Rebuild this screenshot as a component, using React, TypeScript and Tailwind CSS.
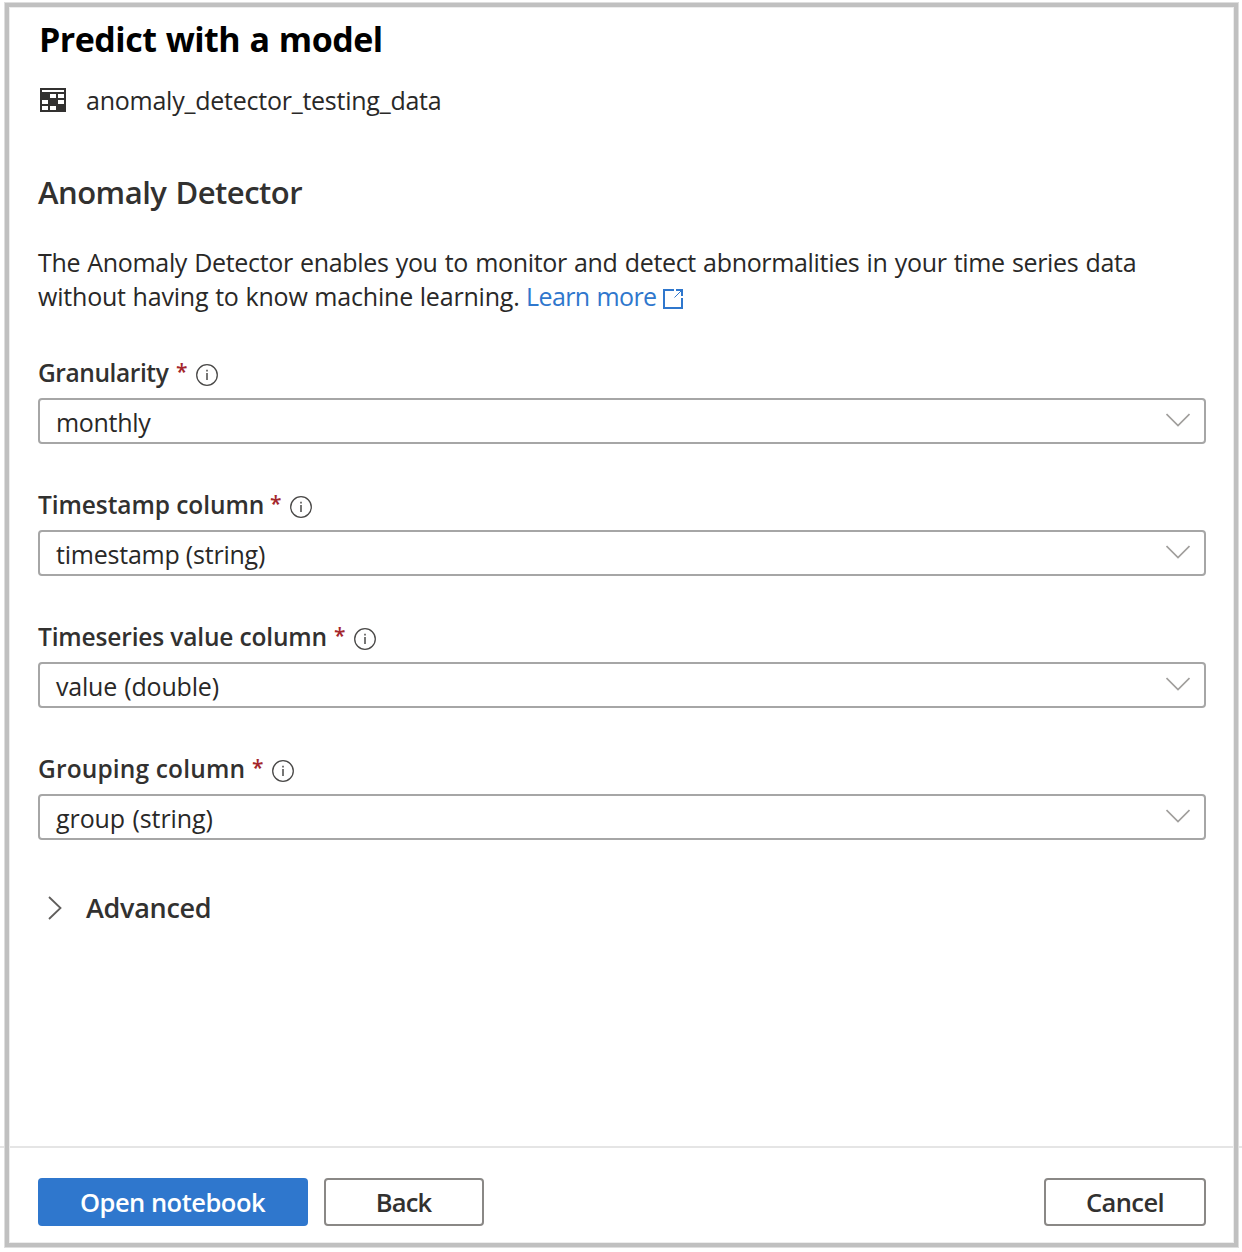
import type { ReactNode } from "react";

function TableIcon() {
  return (
    <svg className="h-6 w-[26px]" viewBox="0 0 26 24" shapeRendering="crispEdges">
      <path fill="#323130" d="M0 0h26v24H0z" />
      <path
        fill="#fff"
        d="M2 2h22v2H2zM10 6h6v4h-6zM18 6h6v4h-6zM2 12h6v4H2zM18 12h6v4h-6zM2 18h6v4H2zM10 18h6v4h-6z"
      />
    </svg>
  );
}

function ExternalIcon() {
  return (
    <svg className="h-5 w-5" viewBox="0 0 20 20" fill="none" stroke="#2f77cd">
      <path strokeWidth="2" d="M11 1H1v18h18V9M13 1h6v6" />
      <path strokeWidth="1" d="M11.5 8.5 18.5 1.5" />
    </svg>
  );
}

function InfoIcon() {
  return (
    <svg className="h-[22px] w-[22px]" viewBox="0 0 22 22" fill="none">
      <circle cx="11" cy="11" r="10.3" stroke="#4a4948" strokeWidth="1.3" />
      <path stroke="#4a4948" strokeWidth="1.5" d="M11 9v7M11 5.8v1.6" />
    </svg>
  );
}

function Field({ label, value }: { label: ReactNode; value: ReactNode }) {
  return (
    <div className="mb-[43px]">
      <div className="mb-[7px] flex h-9 items-center text-[24.5px] leading-9 font-semibold text-[#323130]">
        {label}
        <span className="ml-[7px] w-3 pb-1 text-[21px] text-[#a4262c]">*</span>
        <span className="mt-1 ml-2">
          <InfoIcon />
        </span>
      </div>
      <div className="flex h-[46px] items-center justify-between rounded-[4px] border-2 border-[#a6a6a6] pr-3.5 pl-4 text-[25px]">
        <span className="pt-[3px]">{value}</span>
        <svg className="mb-[3px] h-[14px] w-6" viewBox="0 0 24 14" fill="none">
          <path stroke="#a19f9d" strokeWidth="1.7" d="M.5 1 12 12.5 23.5 1" />
        </svg>
      </div>
    </div>
  );
}

export default function App() {
  return (
    <div className="relative flex h-[1252px] w-[1242px] flex-col overflow-hidden bg-white font-['Open_Sans',sans-serif] whitespace-nowrap text-[#292827]">
      <main className="flex-1 pt-[15px] pr-9 pl-[38px]">
        <h1 className="h-12 pl-px text-[34px] leading-[48px] font-bold tracking-[-0.52px] text-black [word-spacing:1px]">
          Predict with a model
        </h1>
        <div className="mt-[19px] flex h-9 items-center pl-0.5 text-[25px] leading-9">
          <TableIcon />
          <span className="ml-5 tracking-[-0.24px]">anomaly_detector_testing_data</span>
        </div>
        <h2 className="mt-[52px] h-11 text-[31px] leading-[44px] font-semibold tracking-[-0.5px] text-[#323130] [word-spacing:1.5px]">
          Anomaly Detector
        </h2>
        <p className="mt-[31px] text-[25px] leading-[34px]">
          <span className="block tracking-[-0.33px] [word-spacing:1px]">
            The Anomaly Detector enables you to monitor and detect abnormalities in your time series data
          </span>
          <span className="flex items-center">
            <span className="w-[482px] tracking-[-0.2px] [word-spacing:0.5px]">without having to know machine learning.</span>
            <a className="ml-[6px] flex items-center text-[#2f77cd]" href="#">
              <span className="w-[130px] tracking-[-0.6px] [word-spacing:1px]">Learn more</span>
              <span className="mt-1.5 ml-[7px]">
                <ExternalIcon />
              </span>
            </a>
          </span>
        </p>
        <div className="pt-[42px]">
          <Field
            label={<span className="w-[131px] tracking-[-0.42px]">Granularity</span>}
            value={<span className="tracking-[-0.3px]">monthly</span>}
          />
          <Field
            label={<span className="w-[225px] tracking-[-0.08px]">Timestamp column</span>}
            value={<span className="tracking-[-0.22px]">timestamp (string)</span>}
          />
          <Field
            label={<span className="w-[289px] tracking-[-0.16px]">Timeseries value column</span>}
            value={<span className="tracking-[-0.2px] [word-spacing:1px]">value (double)</span>}
          />
          <Field
            label={<span className="w-[207px] tracking-[0.15px]">Grouping column</span>}
            value={<span className="tracking-[-0.08px] [word-spacing:1px]">group (string)</span>}
          />
        </div>
        <div className="mt-12 flex h-10 items-center text-[27px] font-semibold text-[#323130]">
          <svg className="ml-2.5 h-6 w-[14px]" viewBox="0 0 14 24" fill="none">
            <path stroke="#605e5c" strokeWidth="1.8" d="M1 1 12.5 12 1 23" />
          </svg>
          <span className="ml-6 tracking-[-0.3px]">Advanced</span>
        </div>
      </main>
      <footer className="flex h-[106px] gap-4 border-t-2 border-[#e5e5e5] pt-[30px] pr-9 pl-[38px] text-[25.5px] font-semibold text-[#323130]">
        <button className="h-12 w-[270px] rounded-[4px] bg-[#2f77cd] pt-px pr-px tracking-[-0.5px] text-white">
          Open notebook
        </button>
        <button className="h-12 w-40 rounded-[4px] border-2 border-[#8a8886] pr-px tracking-[-0.9px]">Back</button>
        <button className="ml-auto h-12 w-[162px] rounded-[4px] border-2 border-[#8a8886] tracking-[-0.6px]">
          Cancel
        </button>
      </footer>
      <div className="pointer-events-none absolute top-0.5 right-[3px] bottom-1 left-1 border border-[#dedede]">
        <div className="h-full border-4 border-[#c0c0c0]">
          <div className="h-full border border-[#ececec]" />
        </div>
      </div>
    </div>
  );
}
